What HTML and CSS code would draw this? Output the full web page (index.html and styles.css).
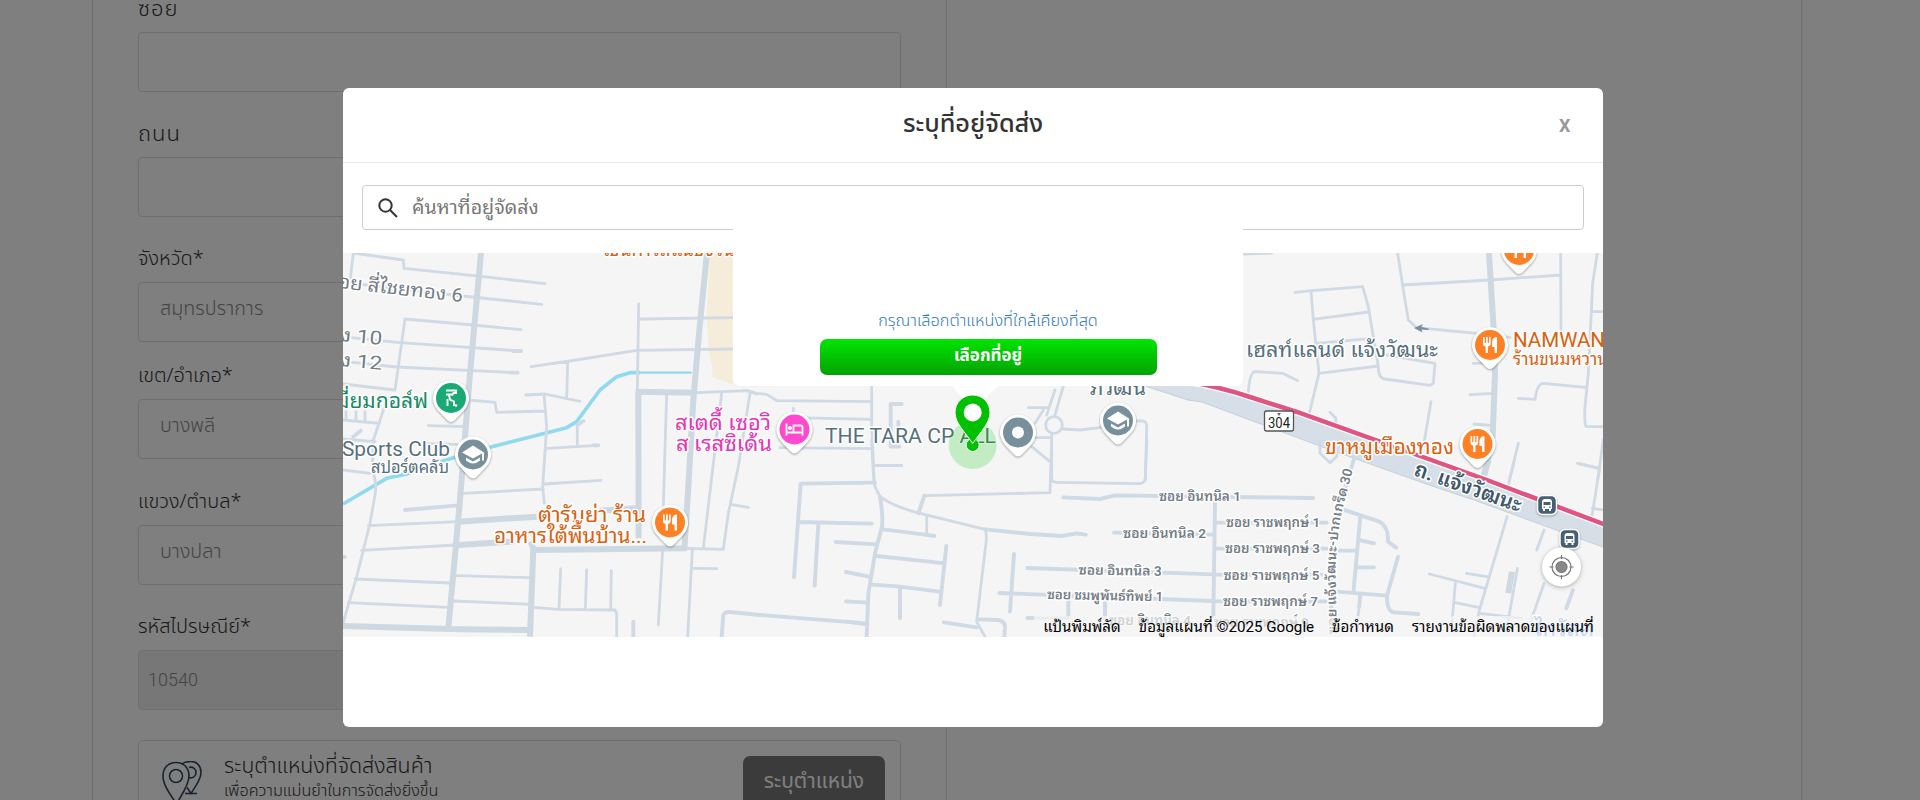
FILE: index.html
```html
<!DOCTYPE html>
<html lang="th">
<head>
<meta charset="utf-8">
<title>ระบุที่อยู่จัดส่ง</title>
<link rel="stylesheet" href="styles.css">
</head>
<body>
<main class="page">
  <section class="panel">
    <div class="field"><label class="label wide">ซอย</label><div class="input"></div></div>
    <div class="field"><label class="label wide">ถนน</label><div class="input"></div></div>
    <div class="field"><label class="label">จังหวัด*</label><div class="input select">สมุทรปราการ</div></div>
    <div class="field tight"><label class="label">เขต/อำเภอ*</label><div class="input select">บางพลี</div></div>
    <div class="field loose"><label class="label">แขวง/ตำบล*</label><div class="input select">บางปลา</div></div>
    <div class="field"><label class="label">รหัสไปรษณีย์*</label><div class="input disabled">10540</div></div>
    <div class="location">
      <svg class="location-icon" viewBox="0 0 40 46" width="40" height="46" fill="none" stroke="#33475b" stroke-width="1.6">
        <path d="M14 1.500C6 1.500 1 7 1 15c0 9 7 18 13.500 28C20 33 27 24 27 15 27 7 22 1.500 14 1.500z"/><circle cx="14" cy="15" r="6.500"/>
        <path d="M20 3c3-2.500 6-2.500 9-2.500 6 0 10 4.500 10 11 0 7-5 13-10 21l-4-6M27 6.500a5.300 5.300 0 1 1 0 10M23 32.500h12"/>
      </svg>
      <div class="location-text"><div class="location-title">ระบุตำแหน่งที่จัดส่งสินค้า</div><div class="location-sub">เพื่อความแม่นยำในการจัดส่งยิ่งขึ้น</div></div>
      <button class="location-btn">ระบุตำแหน่ง</button>
    </div>
  </section>
  <section class="panel"></section>
</main>
<div class="overlay">
  <div class="modal">
    <header class="modal-head"><h1 class="modal-title">ระบุที่อยู่จัดส่ง</h1><span class="close">X</span></header>
    <div class="search">
      <svg width="20" height="20" viewBox="0 0 20 20" fill="none" stroke="#333" stroke-width="2"><circle cx="7.500" cy="7.500" r="6.200"/><path d="M12 12l7 7"/></svg>
      <span class="placeholder">ค้นหาที่อยู่จัดส่ง</span>
    </div>
    <div class="map">
      <svg class="tiles" width="1260" height="384" viewBox="343 253 1260 384">
        <defs>
          <g id="pin"><path class="pin-shadow" d="M0-18A18 18 0 0 0-13 12.500L-4 22Q0 26 4 22L13 12.500A18 18 0 0 0 0-18z"/><circle r="15"/></g>
          <g id="cap" fill="#fff"><path d="M0-9L-11-2 0 4 9-1V6H11V-2z"/><path d="M-7 3L0 7 7 3V6Q0 12-7 6z"/></g>
          <g id="food" fill="#fff"><path d="M-7-8h1.700v6h1.300v-6h1.700v6h1.300v-6H.700v7Q.500 1-2 1.500V8h-2.400V1.500Q-7 1-7-1zM7-8V8H4.600V2H2V-3Q2.500-8 7-8z"/></g>
          <g id="bus"><rect class="bus-box" x="-9.500" y="-9.500" width="19" height="19" rx="5"/><path fill="#fff" fill-rule="evenodd" d="M-5-3Q-5-6-2-6H2Q5-6 5-3V4H4V6H2V4H-2V6H-4V4H-5zM-3.500-3V0H3.500V-3zM-3.500 1.500V2.700H-2V1.500zM2 1.500V2.700H3.500V1.500z"/></g>
          <path id="lane30" d="M1337 634L1335.500 570Q1337 530 1344 503L1355 462"/>
        </defs>
        <rect x="343" y="253" width="1260" height="384" fill="#f5f5f5"/>
        <g class="roads" transform="translate(340 240) scale(.33333)">
          <path class="field-area" d="M1110 39H1178V437H1310V439H1190L1118 410 1115 370 1106 330 1100 230z"/>
          <path class="water" d="M9 792L140 715 200 702 310 662 450 622 680 563 710 545 780 450 830 410 870 398H900"/><path class="water thin" d="M890 398H1055"/>
          <path d="M40 39L30 125M40 39L190 60 192 85 430 110 615 131M0 126L340 165 605 193M165 450L195 237 400 255 543 269M0 290L180 308 543 333M0 363L170 381 533 398M9 432L165 450M9 540L118 550M132 505L100 600 97 690Q112 730 105 765L90 850 50 1010 9 1150M9 690L90 700M18 515V540M48 515V542M75 515V544M9 597L105 605M265 557L380 560M240 610L350 613M385 480L465 487 470 517 615 513M557 465L615 462 720 484M612 462L620 560 608 740 613 790M683 365L680 475M573 380L690 363 890 331 1178 327M896 192L892 455M900 237L1178 233M620 625L775 616M712 620V555M612 732L783 721M370 760L610 747M85 857L355 845M65 931L345 915M45 1017L330 1029M25 1088L325 1102M350 1007L570 1013M343 1083L575 1093M582 1102L655 1108 825 1110 830 1120V1190M662 987L657 1105M740 990L736 1105M814 992L812 1108M1070 458L1220 452 1250 462M980 460L970 800M1145 460L1090 925M1230 460L1195 680 1165 820 1150 927M1040 925L1150 928M968 930L955 1155M1057 930L1043 1190M1060 985L1130 986M1172 793L1225 802"/>
          <path class="mid" d="M195 810L355 796M520 333H543M512 398H533M712 555L730 543M40 590L62 572M880 1145V1190M1145 1190L1150 1125Q1155 1115 1170 1116L1260 1125 1578 1150M760 616H775M9 951H14"/>
          <path class="big" d="M423 39L390 400 360 780 325 1165M1101 39L1078 270 1060 480 1045 740 1033 930M887 455L1063 458M895 455L896 895M355 845L590 830M780 812L890 805M355 915L520 905M572 905L580 925 570 1190M575 930L1040 925M9 1158L360 1168 575 1170"/>
        </g>
        <g class="roads" transform="translate(730 230) scale(.33333)">
          <path d="M50 482L80 490 110 493 140 512 425 515M425 468V580L432 750M190 535V653M190 563L425 568M150 653L425 656M430 707H515M895 533H955M975 480L950 555M1000 468L975 555M1000 597L1050 600 1115 592M1215 573H1240Q1250 575 1250 590L1246 750M915 623H960M905 650L960 695M965 610V750M940 540L915 580"/>
          <circle cx="972" cy="585" r="25"/>
          <path class="mid" d="M515 522H482V650H508M505 575V600"/>
        </g>
        <g class="roads" transform="translate(740 440) scale(.33333)">
          <path d="M395 0L400 100 405 140 420 170Q460 200 540 220L735 268M400 76H485M560 230V283M735 268Q740 280 739 300L710 545 735 590M535 220L553 167 930 158 935 0M935 115Q935 127 950 127L1200 131Q1218 130 1216 105L1221 0M880 534H985"/>
          <path class="mid" d="M405 128L182 131 162 412M175 246L395 251M235 250L224 437M420 170Q430 230 426 260L405 340 385 460 380 590M430 268L555 284 583 288M287 306L410 313M410 348L615 370M619 318L600 495M318 396L388 410M390 433L480 440 598 455M480 440V535M318 484L382 488M320 545L380 553M735 268L870 282 965 288 1010 280 1037 284M612 547L710 562M715 538L775 540Q795 545 795 560L793 590M535 220L553 167M970 172L1080 177 1125 166 1720 174M822 342L810 515M778 459L1420 483M862 384L1420 403M862 534H880M985 534V480M1095 530V485M1122 278L1420 284M1425 190L1420 530M1425 248H1760M1425 326H1760M1425 404H1760M1425 484H1760"/>
        </g>
        <path d="M1145 386L1188 400 1202 402 1250 420 1320 446 1359 460 1429 485 1474 500 1611 550V526L1487 482 1297 414 1203 386z" fill="#d6dfe7"/>
        <path d="M1145 386L1188 400 1202 402 1250 420 1320 446 1359 460 1429 485 1474 500 1611 550" fill="none" stroke="#c5d0da"/>
        <g class="roads" transform="translate(1220 240) scale(.33333)">
          <path d="M69 42L155 39M533 39L550 150 565 240 590 263 770 280 870 292M548 135L810 120 1022 105M1022 39L1023 270M1132 39L1118 130 1105 400 1095 500Q1092 560 1100 560H1150M1118 215H1150M225 157L275 152 428 140 445 200 460 290 475 380Q475 415 495 417L630 436 640 430 645 370 500 345M273 152L280 240 297 400 268 520M280 238L445 216M290 310L455 295M297 400L475 378M85 455Q90 395 105 395L188 400 233 422M760 370H820M750 464L820 460M762 552L815 556M895 475L945 478Q952 430 970 430L1098 442M633 485L610 620M895 610L868 720M1075 670L1135 685M1150 600L1133 720M330 517L348 535V560M300 600V640L330 668 350 650V625"/>
          <path class="big" d="M807 39L820 250 825 400 818 590 790 720"/>
        </g>
        <g class="roads" transform="translate(1030 460) scale(.36986 .33333)">
          <path d="M893 405L885 490M1080 342L1230 385M1180 340L1235 350M1310 0L1290 90M1290 170L1215 450 1200 530M1150 370L1140 500M1150 428L1215 443M1390 210L1370 270M1318 325L1290 500M1390 370L1355 480M1480 10L1540 25 1520 165M1520 145L1550 150M1215 460L1330 475"/>
          <path class="mid" d="M875 0L820 200 812 520M845 148L945 185Q970 200 968 245L990 263M893 170L875 390M830 272H880M890 240L930 250M880 322H930M830 395L965 407 995 290M965 407Q965 455 985 457L1050 462M893 405L890 440M1468 390L1450 445"/>
          <path class="big" d="M1303 335L1293 400M1240 0L1225 50"/>
        </g>
        <path class="route-case" d="M1190 382Q1220 387 1250 397L1297 412 1487 480 1611 527"/><path class="route" d="M1190 382Q1220 387 1250 397L1297 412 1487 480 1611 527"/>
        <rect x="1264.500" y="411" width="29" height="20" rx="2" fill="#fff" stroke="#555" stroke-width="1.300"/>
        <text x="1268" y="427.500" textLength="22" lengthAdjust="spacingAndGlyphs" class="shield">304</text><path d="M1277 413h4l-2 3z" fill="#566d7c"/>
        <path d="M1414 328l9-4-1.500 3 7 1.500v1.500l-7-.500 1 3z" fill="#7b909c"/>
        <g class="txt street large">
          <text transform="translate(326 286.500) rotate(6.500)" textLength="137" lengthAdjust="spacingAndGlyphs">ซอย สี่ไชยทอง 6</text>
          <text transform="translate(339 341) rotate(5)" textLength="43" lengthAdjust="spacingAndGlyphs">ง 10</text>
          <text transform="translate(339 366) rotate(5)" textLength="43" lengthAdjust="spacingAndGlyphs">ง 12</text>
        </g>
        <g class="txt street">
          <text x="1159" y="501" textLength="82" lengthAdjust="spacingAndGlyphs">ซอย อินทนิล 1</text><text x="1123" y="538" textLength="83" lengthAdjust="spacingAndGlyphs">ซอย อินทนิล 2</text>
          <text transform="translate(1078.500 574.500) rotate(1)" textLength="83" lengthAdjust="spacingAndGlyphs">ซอย อินทนิล 3</text><text transform="translate(1047 599) rotate(1.200)" textLength="116" lengthAdjust="spacingAndGlyphs">ซอย ชมพูพันธ์ทิพย์ 1</text>
          <text x="1109" y="625" textLength="82" lengthAdjust="spacingAndGlyphs">ซอย อินทนิล 4</text>
          <text x="1226" y="527" textLength="94" lengthAdjust="spacingAndGlyphs">ซอย ราชพฤกษ์ 1</text><text x="1225" y="553" textLength="95" lengthAdjust="spacingAndGlyphs">ซอย ราชพฤกษ์ 3</text><text x="1223.500" y="580" textLength="96" lengthAdjust="spacingAndGlyphs">ซอย ราชพฤกษ์ 5</text><text x="1223" y="606" textLength="95" lengthAdjust="spacingAndGlyphs">ซอย ราชพฤกษ์ 7</text><text x="1214" y="627" textLength="95" lengthAdjust="spacingAndGlyphs">ซอย ราชพฤกษ์ 9</text>
          <text><textPath href="#lane30" textLength="166" lengthAdjust="spacingAndGlyphs">ซอย แจ้งวัฒนะ-ปากเกร็ด 30</textPath></text>
        </g>
        <text class="txt highway" transform="translate(1413 475) rotate(19.500)" textLength="112" lengthAdjust="spacingAndGlyphs">ถ. แจ้งวัฒนะ</text>
        <g class="txt poi">
          <g fill="#d9600d"><text x="603" y="256" textLength="132" lengthAdjust="spacingAndGlyphs">เขนการสแนชงวิน</text><text x="538" y="522" textLength="108" lengthAdjust="spacingAndGlyphs">ตำรับย่า ร้าน</text><text x="494" y="543" textLength="153" lengthAdjust="spacingAndGlyphs">อาหารใต้พื้นบ้าน...</text><text x="1325" y="454" textLength="129" lengthAdjust="spacingAndGlyphs">ขาหมูเมืองทอง</text><text x="1513" y="347" textLength="92" lengthAdjust="spacingAndGlyphs">NAMWAN</text><text class="sub" x="1513" y="365" textLength="95" lengthAdjust="spacingAndGlyphs">ร้านขนมหวาน</text></g>
          <text x="336" y="408" textLength="92" lengthAdjust="spacingAndGlyphs" fill="#158b62">มี่ยมกอล์ฟ</text>
          <g fill="#e534b8"><text x="675" y="430" textLength="96" lengthAdjust="spacingAndGlyphs">สเตดี้ เซอวิ</text><text x="676" y="451" textLength="96" lengthAdjust="spacingAndGlyphs">ส เรสซิเด้น</text></g>
          <g fill="#566f7d"><text x="342" y="456" textLength="108" lengthAdjust="spacingAndGlyphs">Sports Club</text><text class="sub" x="371" y="473" textLength="78" lengthAdjust="spacingAndGlyphs">สปอร์ตคลับ</text><text x="825" y="442.500" textLength="171" lengthAdjust="spacingAndGlyphs">THE TARA CP ALL</text><text x="1090" y="395" textLength="56" lengthAdjust="spacingAndGlyphs">ภิวัฒน์</text><text x="1246" y="357" textLength="192" lengthAdjust="spacingAndGlyphs">เฮลท์แลนด์ แจ้งวัฒนะ</text></g>
          <text x="1534" y="636" textLength="60" lengthAdjust="spacingAndGlyphs" fill="#5b8def">ไทวัสดุ</text>
        </g>
        <g fill="#19a974" transform="translate(451 398)"><use href="#pin"/><path d="M-5-7.500H5V-5H2.500L1-2.500M-5-3.500H1M-2-3L-1 1.500 3 3.500V8M-3.500 1V8" fill="none" stroke="#fff" stroke-width="1.900"/><circle cx="5" cy="7.500" r="1.300" fill="#fff"/></g>
        <g fill="#78909c"><g transform="translate(473 454.500)"><use href="#pin"/><use href="#cap"/></g><g transform="translate(1118 420.500)"><use href="#pin"/><use href="#cap"/></g><g transform="translate(1018 432.500)"><use href="#pin"/><circle r="6" fill="#fff"/></g></g>
        <g fill="#ff49ce" transform="translate(794.500 429.500)"><use href="#pin"/><path d="M-8-6V6M-8 3H8V6M8 3V-2Q8-4 6-4H-1V3" fill="none" stroke="#fff" stroke-width="1.800"/><circle cx="-4.500" cy="-1.500" r="2" fill="#fff"/></g>
        <g fill="#ff8126"><g transform="translate(670 522.500)"><use href="#pin"/><use href="#food"/></g><g transform="translate(1490 345)"><use href="#pin"/><use href="#food"/></g><g transform="translate(1477.500 444)"><use href="#pin"/><use href="#food"/></g><g transform="translate(1519 250)"><use href="#pin"/><use href="#food"/></g></g>
        <use href="#bus" x="1547" y="505"/><use href="#bus" x="1569.500" y="539"/>
        <circle cx="972.700" cy="445" r="24" fill="#00c800" fill-opacity=".2"/>
        <path d="M951 385H999L973 410z" fill="#fff"/>
        <circle cx="972.700" cy="445" r="6.500" fill="#00c000" stroke="#fff"/>
        <path d="M972.700 395C963 395 955 402.500 955 412.500 955 423 965 432 972.700 443.500 980.500 432 990 423 990 412.500 990 402.500 982.500 395 972.700 395z" fill="#00c000" stroke="#fff"/><circle cx="972.700" cy="412.500" r="9" fill="#fff"/>
        <g class="locate" transform="translate(1561.500 567)"><circle class="locate-bg" r="19.500"/><circle r="5.500" fill="#888"/><path d="M0-12V-8M0 12V8M-12 0H-8M12 0H8" /><circle r="9.500" fill="none"/></g>
      </svg>
      <div class="credits"><span>แป้นพิมพ์ลัด</span><span>ข้อมูลแผนที่ ©2025 Google</span><span>ข้อกำหนด</span><span>รายงานข้อผิดพลาดของแผนที่</span></div>
      <div class="info"><div class="info-hint">กรุณาเลือกตำแหน่งที่ใกล้เคียงที่สุด</div><button class="info-btn">เลือกที่อยู่</button></div>
    </div>
  </div>
</div>
</body>
</html>
```
FILE: styles.css
```css
* { box-sizing: border-box; }
body { margin: 0; height: 800px; overflow: hidden; background: #fff; color: #333; font-family: "Noto Sans Thai", Roboto, "Liberation Sans", sans-serif; }
.page { display: flex; width: 1710px; height: 800px; margin-left: 92px; border-left: 1px solid #ddd; border-right: 1px solid #ddd; overflow: hidden; }
.panel { width: 853px; padding: 0 45px; flex: none; }
.panel + .panel { border-left: 1px solid #ddd; width: 855px; }
.field { margin-bottom: 25px; }
.field:first-child { margin-top: -8px; }
.field.tight { margin-top: -8px; margin-bottom: 26px; }
.label { display: block; height: 40px; line-height: 34px; font-size: 20px; font-weight: 300; white-space: nowrap; }
.label.wide { font-size: 22px; letter-spacing: 1px; line-height: 35px; }
.input { height: 60px; border: 1px solid #ddd; border-radius: 4px; padding-left: 21px; line-height: 53px; font-size: 19.800px; font-weight: 300; color: #888; }
.input.disabled { background: #eee; padding-left: 9px; line-height: 57px; font: 300 18px/57px Roboto, sans-serif; }
.location { display: flex; align-items: flex-start; height: 100px; margin-top: 30px; border: 1px solid #ddd; border-radius: 5px; padding: 15px 15px 0 23px; }
.location-icon { flex: none; margin-top: 5px; }
.location-text { flex: 1; margin-left: 22px; white-space: nowrap; font-weight: 300; }
.location-title { font-size: 21.400px; line-height: 22px; height: 23px; }
.location-sub { font-size: 16.200px; line-height: 24px; }
.location-btn { width: 142px; height: 54px; border: 0; border-radius: 7px; background: #777; color: #fff; font: 21px "Noto Sans Thai", sans-serif; padding: 0 0 4px; }
.overlay { position: absolute; inset: 0; background: rgba(0, 0, 0, .5); overflow: hidden; }
.modal { width: 1260px; height: 639px; margin: 88px 0 0 343px; background: #fff; border-radius: 6px; display: flex; flex-direction: column; }
.modal-head { display: grid; grid-template-columns: 60px 1fr 60px; height: 75px; border-bottom: 1px solid #e8e8e8; align-items: center; }
.modal-title { grid-column: 2; margin: 0; padding-bottom: 2px; text-align: center; font-size: 25.300px; font-weight: 500; line-height: 40px; }
.close { font: bold 18px Roboto, sans-serif; color: #999; padding-left: 16px; }
.search { display: flex; align-items: center; height: 45px; margin: 22px 19px 23px; border: 1px solid #ccc; border-radius: 4px; padding-left: 15px; }
.placeholder { margin-left: 14px; font: 19.600px/24px Roboto, "Noto Sans Thai Looped", Loma, Garuda, Umpush, Waree, "Noto Sans Thai", sans-serif; color: #777; white-space: nowrap; }
.map { position: relative; width: 1260px; height: 384px; }
.tiles { display: block; }
.roads { fill: none; stroke: #cfdae4; stroke-linejoin: round; stroke-linecap: round; }
.roads path, .roads circle { vector-effect: non-scaling-stroke; stroke-width: 2.800px; }
.roads .mid { stroke-width: 3.900px; }
.roads .big { stroke: #cdd8e1; stroke-width: 6px; stroke-linecap: butt; }
.roads .water { stroke: #8fdaee; stroke-width: 3.600px; stroke-linecap: butt; }
.roads .water.thin { stroke-width: 2.200px; }
.roads .field-area { fill: #f6ecda; stroke: none; }
.route, .route-case { fill: none; stroke: #df5480; stroke-width: 4.500px; }
.route-case { stroke: #fff; stroke-width: 7px; }
.txt { font-family: Roboto, "Noto Sans Thai Looped", Loma, Garuda, Umpush, Waree, "Noto Sans Thai", sans-serif; paint-order: stroke; stroke: #fff; stroke-width: 3px; stroke-linejoin: round; }
.poi { font-size: 21px; }
.poi .sub { font-size: 17px; }
.street { font-size: 13.500px; font-weight: 600; fill: #747d86; }
.large { font-size: 19px; font-weight: 400; }
.highway { font-size: 21px; font-weight: 600; fill: #40566a; }
.shield { font: 15px Roboto, sans-serif; fill: #222; }
.pin-shadow { fill: #fff; filter: drop-shadow(0 1px 1px rgba(0, 0, 0, .35)); }
.bus-box { fill: #465f75; stroke: #fff; stroke-width: 1.500px; filter: drop-shadow(0 1px 1px rgba(0, 0, 0, .3)); }
.locate { stroke: #777; stroke-width: 1.200px; }
.locate-bg { fill: #fff; stroke: none; filter: drop-shadow(0 1px 2px rgba(0, 0, 0, .3)); }
.credits { position: absolute; right: 0; bottom: 0; width: 569px; height: 21px; background: rgba(245, 245, 245, .7); display: flex; justify-content: flex-end; gap: 18px; padding-right: 9px; font: 15.150px/22px Roboto, "Noto Sans Thai Looped", Loma, Garuda, Umpush, Waree, "Noto Sans Thai", sans-serif; color: #000; white-space: nowrap; }
.info { position: absolute; left: 390px; top: -24px; width: 510px; height: 157px; border-radius: 0 0 7px 7px; background: #fff; display: flex; flex-direction: column; align-items: center; justify-content: flex-end; padding-bottom: 11px; }
.info-hint { font-size: 16.300px; font-weight: 300; color: #337ab7; line-height: 24px; margin-bottom: 6px; white-space: nowrap; }
.info-btn { width: 337px; height: 36px; padding: 0 0 3px; border: 0; border-radius: 7px; color: #fff; font: bold 17px "Noto Sans Thai", sans-serif; background: linear-gradient(#00e500, #05a205); }
```
